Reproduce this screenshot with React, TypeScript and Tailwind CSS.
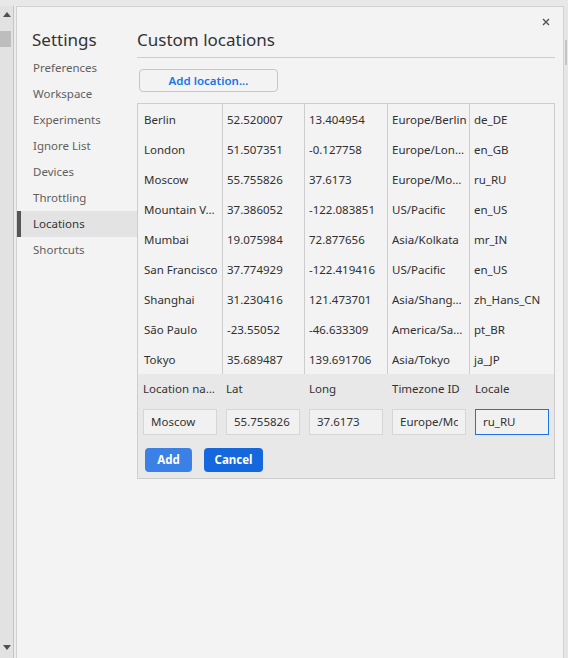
import React from "react";

const font = { fontFamily: '"Noto Sans", "Open Sans", sans-serif' };

const rows = [
  ["Berlin", "52.520007", "13.404954", "Europe/Berlin", "de_DE"],
  ["London", "51.507351", "-0.127758", "Europe/Lon…", "en_GB"],
  ["Moscow", "55.755826", "37.6173", "Europe/Mo…", "ru_RU"],
  ["Mountain V…", "37.386052", "-122.083851", "US/Pacific", "en_US"],
  ["Mumbai", "19.075984", "72.877656", "Asia/Kolkata", "mr_IN"],
  ["San Francisco", "37.774929", "-122.419416", "US/Pacific", "en_US"],
  ["Shanghai", "31.230416", "121.473701", "Asia/Shang…", "zh_Hans_CN"],
  ["São Paulo", "-23.55052", "-46.633309", "America/Sa…", "pt_BR"],
  ["Tokyo", "35.689487", "139.691706", "Asia/Tokyo", "ja_JP"],
];

const nav = [
  "Preferences",
  "Workspace",
  "Experiments",
  "Ignore List",
  "Devices",
  "Throttling",
  "Locations",
  "Shortcuts",
];

const labels = ["Location na…", "Lat", "Long", "Timezone ID", "Locale"];
const values = ["Moscow", "55.755826", "37.6173", "Europe/Moscow", "ru_RU"];
const pads = ["pl-[5px]", "pl-[4px]", "pl-[5px]", "pl-[5px]", "pl-[6px]"];

export default function App() {
  return (
    <div
      className="w-[568px] h-[658px] bg-[#e6e6e6] flex flex-col overflow-hidden text-[#333]"
      style={font}
    >
      <div className="h-[6px] shrink-0 bg-[#e8e8e8]" />
      <div className="flex flex-1 min-h-0">
        {/* left background strip */}
        <div className="w-[13px] shrink-0 bg-[#e2e2e2] flex flex-col items-center">
          <svg width="8" height="5" viewBox="0 0 8 5" className="mt-[6px]">
            <path d="M0 5 L4 0 L8 5 Z" fill="#505050" />
          </svg>
          <div className="w-[11px] h-[16px] bg-[#bdbdbd] mt-[14px] self-start" />
          <div className="flex-1" />
          <svg width="8" height="5" viewBox="0 0 8 5" className="mb-[8px]">
            <path d="M0 0 L8 0 L4 5 Z" fill="#505050" />
          </svg>
        </div>
        <div className="w-[1px] shrink-0 bg-[#c4c4c4]" />
        <div className="w-[2px] shrink-0 bg-[#ececec]" />

        {/* dialog */}
        <div className="relative w-[548px] shrink-0 bg-[#f3f3f3] border-l border-t border-r border-[#d2d2d2] flex">
          <button className="absolute right-[12px] top-[10px] w-[10px] h-[10px] flex items-center justify-center">
            <svg width="8" height="8" viewBox="0 0 8 8">
              <path d="M1 1 L7 7 M7 1 L1 7" stroke="#555" strokeWidth="1.4" />
            </svg>
          </button>

          {/* sidebar */}
          <div className="w-[120px] shrink-0 pt-[21px]">
            <div className="pl-[15px] h-[27px] text-[17px] leading-[24px] text-[#333]">
              Settings
            </div>
            {nav.map((n) => (
              <div
                key={n}
                className={
                  n === "Locations"
                    ? "h-[26px] flex items-center pl-[12px] border-l-4 border-[#555] bg-[#e3e3e3] text-[11.5px] text-[#333]"
                    : "h-[26px] flex items-center pl-[16px] text-[11.5px] text-[#5f5f5f]"
                }
              >
                {n}
              </div>
            ))}
          </div>

          {/* main */}
          <div className="w-[418px] shrink-0 pt-[21px]">
            <div className="h-[30px] text-[17px] leading-[24px] text-[#333] border-b border-[#cdcdcd]">
              Custom locations
            </div>
            <button className="ml-[2px] mt-[11px] w-[139px] h-[23px] rounded-[4px] border border-[#c6c6c6] bg-[#f3f3f3] text-[11.5px] font-semibold text-[#1a73e8] flex items-center justify-center">
              Add location...
            </button>
            <div className="mt-[11px] w-[418px] border border-[#cdcdcd]">
              {rows.map((r, i) => (
                <div
                  key={i}
                  className="grid grid-cols-[84px_82px_83px_82px_85px] h-[30px] text-[11.5px] text-[#303030]"
                >
                  {r.map((c, j) => (
                    <div
                      key={j}
                      className={
                        j === 0
                          ? "flex items-center pl-[6px] pt-[1px] whitespace-nowrap overflow-hidden"
                          : "flex items-center pl-[4px] pt-[1px] border-l border-[#cdcdcd] whitespace-nowrap overflow-hidden"
                      }
                    >
                      {c}
                    </div>
                  ))}
                </div>
              ))}
              <div className="bg-[#e8e8e8] h-[104px] flex flex-col">
                <div className="grid grid-cols-[84px_82px_83px_82px_85px] h-[28px] items-center text-[11.5px] text-[#333] mt-[1px]">
                  {labels.map((l, j) => (
                    <div key={j} className={pads[j] + " whitespace-nowrap"}>
                      {l}
                    </div>
                  ))}
                </div>
                <div className="grid grid-cols-[84px_82px_83px_82px_85px] mt-[5px]">
                  {values.map((v, j) => (
                    <div key={j} className={pads[j]}>
                      <input
                        readOnly
                        value={v}
                        className={
                          j === 4
                            ? "w-[74px] h-[26px] bg-[#f1f1f1] border border-[#1a73e8] px-[7px] text-[11.5px] text-[#333] outline-none"
                            : "w-[74px] h-[26px] bg-[#f1f1f1] border border-[#d6d6d6] px-[7px] text-[11.5px] text-[#333] outline-none"
                        }
                        style={font}
                      />
                    </div>
                  ))}
                </div>
                <div className="flex gap-[12px] mt-[13px] pl-[7px]">
                  <button className="w-[47px] h-[24px] rounded-[4px] bg-[#3b80e4] text-white text-[11.5px] font-bold flex items-center justify-center">
                    Add
                  </button>
                  <button className="w-[59px] h-[24px] rounded-[4px] bg-[#1467dc] text-white text-[11.5px] font-bold flex items-center justify-center">
                    Cancel
                  </button>
                </div>
              </div>
            </div>
          </div>
        </div>

        {/* right strip */}
        <div className="flex-1 bg-[#e6e6e6] flex flex-col">
          <div className="h-[34px]" />
          <div className="h-[25px] w-[2px] bg-[#c4c4c4] ml-[1px]" />
        </div>
      </div>
    </div>
  );
}
